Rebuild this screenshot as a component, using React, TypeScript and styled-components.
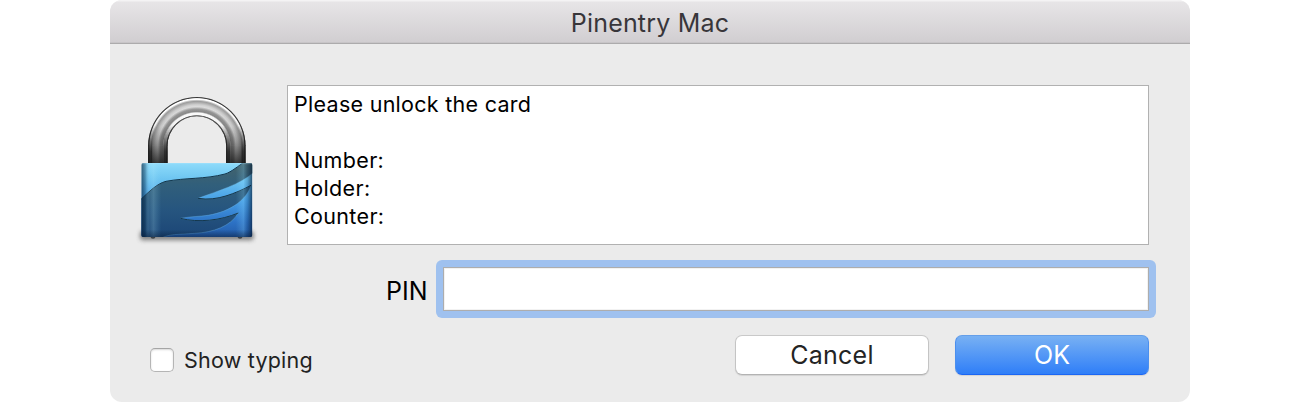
import React from "react";
import styled, { createGlobalStyle } from "styled-components";

const GlobalStyle = createGlobalStyle`
  * { box-sizing: border-box; }
  body { margin: 0; background: #fff; font-family: Inter, "Liberation Sans", sans-serif; }
`;

const Dialog = styled.main`
  width: 1080px;
  height: 402px;
  margin: 0 auto;
  border-radius: 12px;
  background: #ebebeb;
  overflow: hidden;
`;

const TitleBar = styled.header`
  height: 44px;
  display: flex;
  justify-content: center;
  border-bottom: 1px solid #acabac;
  background: linear-gradient(#f5f4f5 0, #f3f2f3 1px, #e7e5e7 2px, #d1ced1 42px, #bdbbbd 43px);
`;

const Label = styled.span<{ $size: number; $line: number; $spacing?: number; $color?: string }>`
  font-size: ${(p) => p.$size}px;
  line-height: ${(p) => p.$line}px;
  letter-spacing: ${(p) => p.$spacing ?? 0}px;
  color: ${(p) => p.$color ?? "#000"};
  white-space: pre;
`;

const Content = styled.div`
  display: flex;
  padding: 41px 41px 0 15px;
`;

const LockIcon = styled.svg`
  display: block;
  width: 145px;
  height: 170px;
  margin-right: 17px;
`;

const Message = styled.section`
  flex: 1;
  height: 160px;
  padding: 4px 6px;
  display: flex;
  flex-direction: column;
  border: 1px solid #b1b1b1;
  background: #fff;
`;

const PinRow = styled.label`
  display: flex;
  height: 58px;
  margin-top: 5px;
  padding: 0 34px 0 276px;
`;

const PinText = styled.span`
  width: 50px;
  padding-top: 11px;
`;

const FocusRing = styled.span`
  flex: 1;
  display: flex;
  padding: 7px;
  border-radius: 6px;
  background: #9fc1ef;
`;

const PinInput = styled.input`
  flex: 1;
  min-width: 0;
  padding: 0 6px;
  border: 1px solid #adadad;
  border-radius: 0;
  outline: 0;
  background: #fff;
  box-shadow: inset 0 0 0 1px #f2f2f2;
  font: 24px Inter, sans-serif;
`;

const Footer = styled.footer`
  display: flex;
  margin-top: 17px;
  padding: 0 41px 0 40px;
`;

const CheckLabel = styled.label`
  display: flex;
  flex: 1;
  gap: 10px;
  padding-top: 13px;
`;

const Checkbox = styled.input`
  appearance: none;
  width: 24px;
  height: 24px;
  margin: 0;
  border: 1px solid #b5b5b5;
  border-top-color: #a5a5a5;
  border-radius: 5px;
  background: #fff;
  box-shadow: inset 0 1px 2px #d8d8d8;
`;

const Button = styled.button<{ $primary?: boolean }>`
  width: 194px;
  height: 40px;
  margin-left: ${(p) => (p.$primary ? 26 : 0)}px;
  padding: 0;
  display: flex;
  justify-content: center;
  border: 1px solid;
  border-color: ${(p) => (p.$primary ? "#659fe9 #4b8fee #1b66f4" : "#c9c9c9 #c4c4c4 #b3b3b3")};
  border-radius: 7px;
  background: ${(p) => (p.$primary ? "linear-gradient(#7ab2f3, #2d7df8)" : "#fff")};
  background-origin: border-box;
  box-shadow: 0 1px 1px #d3d3d3;
  font-family: inherit;
`;

const MetalStops = () => (
  <>
    <stop offset=".598" stopColor="#1b1b1b" />
    <stop offset=".618" stopColor="#696969" />
    <stop offset=".632" stopColor="#fff" />
    <stop offset=".672" stopColor="#fff" />
    <stop offset=".7" stopColor="#8a8a8a" />
    <stop offset=".75" stopColor="#999" />
    <stop offset=".8" stopColor="#dcdcdc" />
    <stop offset=".84" stopColor="#d0d0d0" />
    <stop offset=".91" stopColor="#9d9d9d" />
    <stop offset=".935" stopColor="#d0d0d0" />
    <stop offset=".95" stopColor="#fff" />
    <stop offset=".968" stopColor="#fff" />
    <stop offset=".984" stopColor="#444" />
    <stop offset="1" stopColor="#252525" />
  </>
);

const Padlock = () => (
  <LockIcon viewBox="0 0 435 510" aria-hidden="true">
    <defs>
      <radialGradient id="arc" gradientUnits="userSpaceOnUse" cx="215.5" cy="182" r="146">
        <MetalStops />
      </radialGradient>
      <linearGradient id="legLeft" gradientUnits="userSpaceOnUse" x1="215.5" x2="69.5" y1="0" y2="0">
        <MetalStops />
      </linearGradient>
      <linearGradient id="legRight" gradientUnits="userSpaceOnUse" x1="215.5" x2="361.5" y1="0" y2="0">
        <MetalStops />
      </linearGradient>
      <linearGradient id="legShade" gradientUnits="userSpaceOnUse" x1="0" x2="0" y1="65" y2="234">
        <stop stopColor="#151515" stopOpacity="0" />
        <stop offset=".35" stopColor="#151515" stopOpacity=".06" />
        <stop offset=".65" stopColor="#151515" stopOpacity=".36" />
        <stop offset="1" stopColor="#111" stopOpacity=".8" />
      </linearGradient>
      <linearGradient id="edgeFade" gradientUnits="userSpaceOnUse" x1="0" x2="0" y1="120" y2="200">
        <stop stopColor="#151515" stopOpacity="0" />
        <stop offset="1" stopColor="#151515" stopOpacity=".75" />
      </linearGradient>
      <linearGradient id="body" x2="0" y2="1">
        <stop stopColor="#8edbfa" />
        <stop offset=".2" stopColor="#70c7f2" />
        <stop offset=".5" stopColor="#469fe6" />
        <stop offset=".8" stopColor="#2d72c5" />
        <stop offset="1" stopColor="#235ba8" />
      </linearGradient>
      <linearGradient id="wing" x2="0" y2="1">
        <stop stopColor="#46646a" />
        <stop offset=".3" stopColor="#315f7b" />
        <stop offset=".63" stopColor="#26557f" />
        <stop offset="1" stopColor="#1b4576" />
      </linearGradient>
      <linearGradient id="sides">
        <stop stopColor="#031b33" stopOpacity=".65" />
        <stop offset=".035" stopColor="#052845" stopOpacity=".38" />
        <stop offset=".075" stopColor="#b9f2ff" stopOpacity=".08" />
        <stop offset=".11" stopColor="#b9f2ff" stopOpacity=".2" />
        <stop offset=".18" stopColor="#8edcff" stopOpacity="0" />
        <stop offset=".85" stopColor="#8edcff" stopOpacity="0" />
        <stop offset=".92" stopColor="#8edcff" stopOpacity=".22" />
        <stop offset=".955" stopColor="#092749" stopOpacity=".2" />
        <stop offset="1" stopColor="#03172f" stopOpacity=".68" />
      </linearGradient>
      <linearGradient id="base" x2="0" y2="1">
        <stop offset=".9" stopColor="#06182f" stopOpacity="0" />
        <stop offset="1" stopColor="#06182f" stopOpacity=".45" />
      </linearGradient>
      <filter id="shadow" x="-20%" y="-100%" width="140%" height="300%">
        <feGaussianBlur stdDeviation="6" />
      </filter>
      <clipPath id="bodyShape">
        <rect x="49" y="234" width="333" height="222" rx="6" />
      </clipPath>
    </defs>
    <rect x="45" y="438" width="341" height="28" rx="9" fill="#555" opacity=".7" filter="url(#shadow)" />
    <path d="M69.5 182a146 146 0 0 1 292 0h-58a88 88 0 0 0-176 0Z" fill="url(#arc)" />
    <path d="M69.5 181h58v58h-58Z" fill="url(#legLeft)" />
    <path d="M303.5 181h58v58h-58Z" fill="url(#legRight)" />
    <path d="M69.5 239v-57a146 146 0 0 1 292 0v57h-58v-57a88 88 0 0 0-176 0v57Z" fill="url(#legShade)" />
    <path
      d="M75.5 239v-57a140 140 0 0 1 280 0v57M121.5 239v-57a94 94 0 0 1 188 0v57"
      fill="none"
      stroke="url(#edgeFade)"
      strokeWidth="12"
    />
    <ellipse cx="84" cy="457" rx="7" ry="4" fill="#3c4146" />
    <ellipse cx="345" cy="457" rx="7" ry="4" fill="#3c4146" />
    <g clipPath="url(#bodyShape)">
      <path d="M49 234h333v222H49Z" fill="url(#body)" />
      <path
        d="M45 346C74 318 96 296 123 289C181 278 240 283 300 267C320 261 340 242 360 230H386V262C347 298 280 317 219 340C276 350 333 324 378 301C359 361 286 389 230 393C205 395 182 397 166 400C221 414 287 406 340 384C316 424 266 442 208 445C162 449 129 446 109 460H45Z"
        fill="url(#wing)"
        stroke="#73b9e6"
        strokeOpacity=".55"
        strokeWidth="2"
      />
      <path
        d="M45 346C74 318 96 296 123 289C181 278 240 283 300 267C320 261 340 242 360 230M219 340C276 350 333 324 378 301M166 400C221 414 287 406 340 384"
        fill="none"
        stroke="#14364b"
        strokeWidth="3"
      />
      <path d="M49 234h333v222H49Z" fill="url(#sides)" />
      <path d="M49 234h333v222H49Z" fill="url(#base)" />
      <path d="M51 236h329" stroke="#c3efff" strokeOpacity=".45" strokeWidth="2" />
    </g>
  </LockIcon>
);

export default function App() {
  return (
    <>
      <GlobalStyle />
      <Dialog>
        <TitleBar>
          <Label $size={25} $line={46} $spacing={0.2} $color="#38363a">Pinentry Mac</Label>
        </TitleBar>
        <Content>
          <Padlock />
          <Message>
            <Label $size={21.5} $line={28} $spacing={0.28}>Please unlock the card</Label>
            <Label $size={21.5} $line={28}> </Label>
            <Label $size={21.5} $line={28} $spacing={0.34}>Number:</Label>
            <Label $size={21.5} $line={28} $spacing={0.34}>Holder:</Label>
            <Label $size={21.5} $line={28} $spacing={0.34}>Counter:</Label>
          </Message>
        </Content>
        <PinRow>
          <PinText><Label $size={25} $line={40}>PIN</Label></PinText>
          <FocusRing><PinInput aria-label="PIN" /></FocusRing>
        </PinRow>
        <Footer>
          <CheckLabel>
            <Checkbox type="checkbox" />
            <Label $size={21.5} $line={25} $spacing={0.22} $color="#222">Show typing</Label>
          </CheckLabel>
          <Button><Label $size={25} $line={38} $spacing={0.25} $color="#242424">Cancel</Label></Button>
          <Button $primary><Label $size={25} $line={38} $color="#fff">OK</Label></Button>
        </Footer>
      </Dialog>
    </>
  );
}
